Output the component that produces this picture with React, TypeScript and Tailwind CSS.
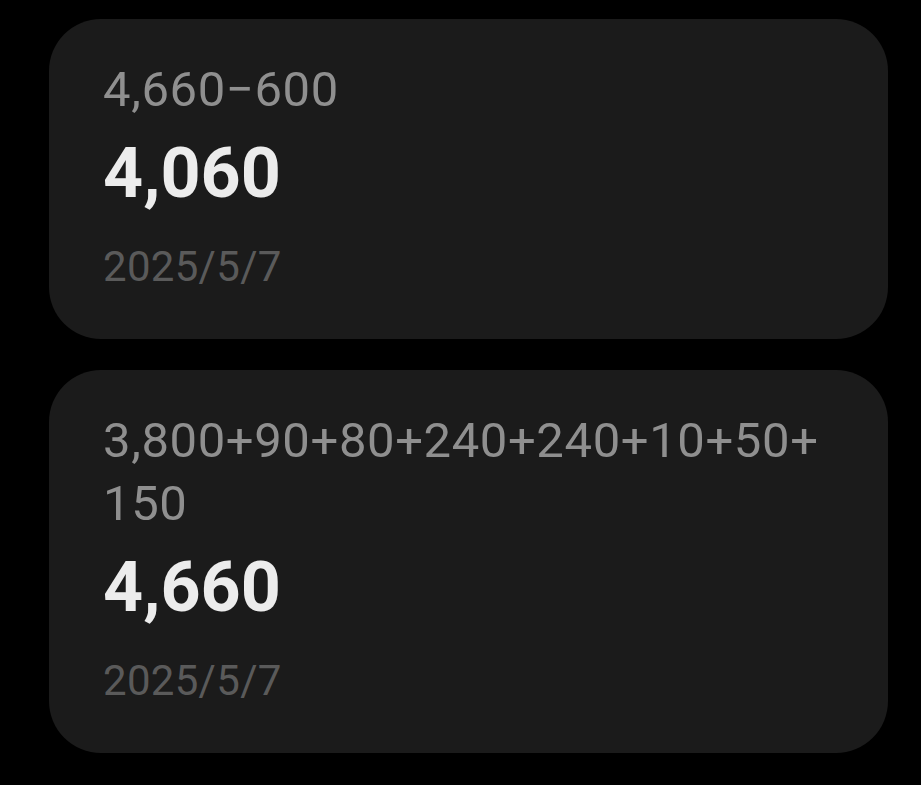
const entries = [
  { expr: ['4,660\u2212600'], result: '4,060', date: '2025/5/7' },
  { expr: ['3,800+90+80+240+240+10+50+', '150'], result: '4,660', date: '2025/5/7' },
];

function HistoryCard({ expr, result, date }: { expr: string[]; result: string; date: string }) {
  return (
    <div className="rounded-[52px] bg-[#1b1b1b] pl-[54px] pr-6 pt-[39px] pb-[47px]">
      <div className="text-[49px] leading-[63px] tracking-[0.6px] text-[#8f8f8f]">
        {expr.map((line, i) => (
          <div key={i}>{line}</div>
        ))}
      </div>
      <div className="mt-[12px] text-[70px] leading-[80px] font-bold text-[#ececec]">{result}</div>
      <div className="mt-[29px] text-[42px] leading-[50px] tracking-[0.3px] text-[#5a5a5a]">{date}</div>
    </div>
  );
}

export default function App() {
  return (
    <div className="min-h-[785px] w-[921px] bg-black pl-[49px] pr-[33px] pt-[19px] font-['Roboto',sans-serif]">
      <div className="flex flex-col gap-[31px]">
        {entries.map((e, i) => (
          <HistoryCard key={i} {...e} />
        ))}
      </div>
    </div>
  );
}
